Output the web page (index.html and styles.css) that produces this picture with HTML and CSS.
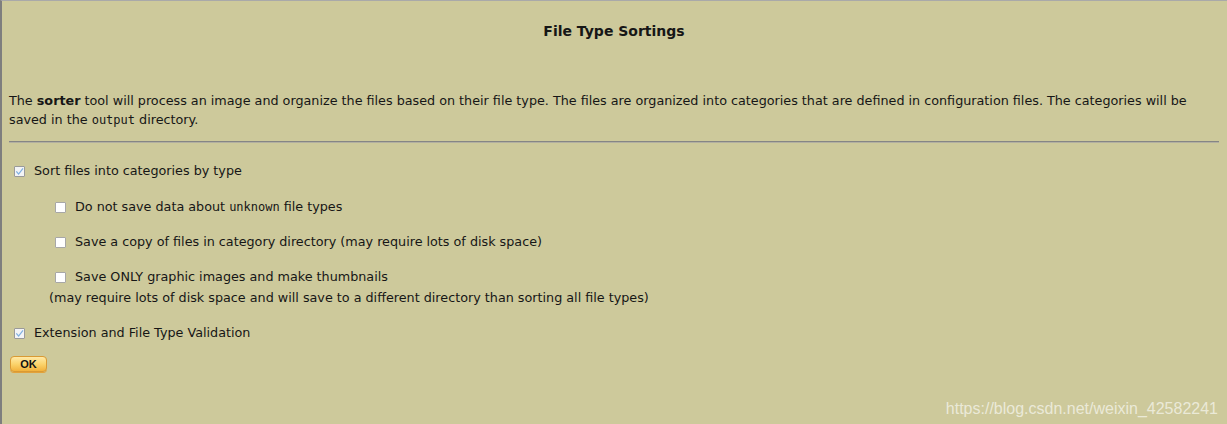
FILE: index.html
```html
<!DOCTYPE html>
<html>
<head>
<meta charset="utf-8">
<title>File Type Sortings</title>
<link rel="stylesheet" href="styles.css">
</head>
<body>
<div class="page">
  <h1 class="title">File Type Sortings</h1>
  <p class="intro">The <b>sorter</b> tool will process an image and organize the files based on their file type. The files are organized into categories that are defined in configuration files. The categories will be saved in the <code>output</code> directory.</p>
  <hr class="rule">
  <div class="options">
    <label class="row first">
      <span class="box checked"><svg viewBox="0 0 11 11" width="11" height="11"><path d="M2.3 5.4 L4.6 8 L9 2.3" fill="none" stroke="#7fb0e0" stroke-width="1.2"/></svg></span>
      <span>Sort files into categories by type</span>
    </label>
    <label class="row sub">
      <span class="box"></span>
      <span>Do not save data about <code>unknown</code> file types</span>
    </label>
    <label class="row sub">
      <span class="box"></span>
      <span>Save a copy of files in category directory (may require lots of disk space)</span>
    </label>
    <div class="group">
      <label class="row sub">
        <span class="box"></span>
        <span>Save ONLY graphic images and make thumbnails</span>
      </label>
      <div class="note">(may require lots of disk space and will save to a different directory than sorting all file types)</div>
    </div>
    <label class="row">
      <span class="box checked"><svg viewBox="0 0 11 11" width="11" height="11"><path d="M2.3 5.4 L4.6 8 L9 2.3" fill="none" stroke="#7fb0e0" stroke-width="1.2"/></svg></span>
      <span>Extension and File Type Validation</span>
    </label>
    <div class="actions">
      <button class="ok" type="button">OK</button>
    </div>
  </div>
  <div class="watermark">https://blog.csdn.net/weixin_42582241</div>
</div>
</body>
</html>
```

FILE: styles.css
```css
html, body {
  margin: 0;
  padding: 0;
  background: #cdc99b;
}

.page {
  position: relative;
  box-sizing: border-box;
  height: 424px;
  border-left: 2px solid #7e7e7e;
  border-top: 1px solid #a9a9a9;
  padding: 0 8px 0 7px;
  font-family: "DejaVu Sans", Verdana, sans-serif;
  font-size: 12.75px;
  color: #161616;
}

.title {
  margin: 0;
  padding-top: 20px;
  height: 20px;
  line-height: 20px;
  font-size: 14px;
  font-weight: bold;
  text-align: center;
}

.intro {
  margin: 50px 0 0 0;
  line-height: 19px;
}

code {
  font-family: "DejaVu Sans Mono", "Liberation Mono", monospace;
  font-size: 12px;
  line-height: 1;
}

.rule {
  margin: 12px 0 0 0;
  height: 0;
  border: 0;
  border-top: 1px solid #858585;
  border-bottom: 1px solid #b3b0a0;
}

.options {
  display: flex;
  flex-direction: column;
  padding-top: 19px;
  gap: 17px;
}

.row {
  display: flex;
  align-items: center;
  gap: 9px;
  height: 18px;
  line-height: 18px;
  padding-left: 5px;
}

.row.first {
  margin-bottom: 1px;
}

.row.sub {
  padding-left: 46px;
}

.box {
  box-sizing: border-box;
  display: inline-block;
  width: 11px;
  height: 11px;
  border: 1px solid #a7a7a7;
  border-radius: 1px;
  background: #ffffff;
  flex: none;
  position: relative;
}

.box.checked {
  background: #f3f4f6;
  border-color: #9a9a9a;
}

.box svg {
  position: absolute;
  left: -1px;
  top: -1px;
}

.note {
  margin-top: 3px;
  padding-left: 40px;
  line-height: 18px;
}

.actions {
  margin-top: -3px;
  padding-left: 1px;
}

.ok {
  box-sizing: border-box;
  width: 37px;
  height: 16px;
  padding: 0;
  border: 1px solid #d99a34;
  border-radius: 4px;
  background: linear-gradient(#ffe9a6, #fbd46d 50%, #f2b23c);
  font-family: "Liberation Sans", Arial, sans-serif;
  font-size: 11px;
  font-weight: bold;
  line-height: 14px;
  color: #111;
  box-shadow: 0 1px 0 #e3a23a;
}

.watermark {
  position: absolute;
  right: 9px;
  bottom: 6px;
  font-family: "Liberation Sans", Arial, sans-serif;
  font-size: 16px;
  color: rgba(255, 255, 255, 0.62);
}
```
